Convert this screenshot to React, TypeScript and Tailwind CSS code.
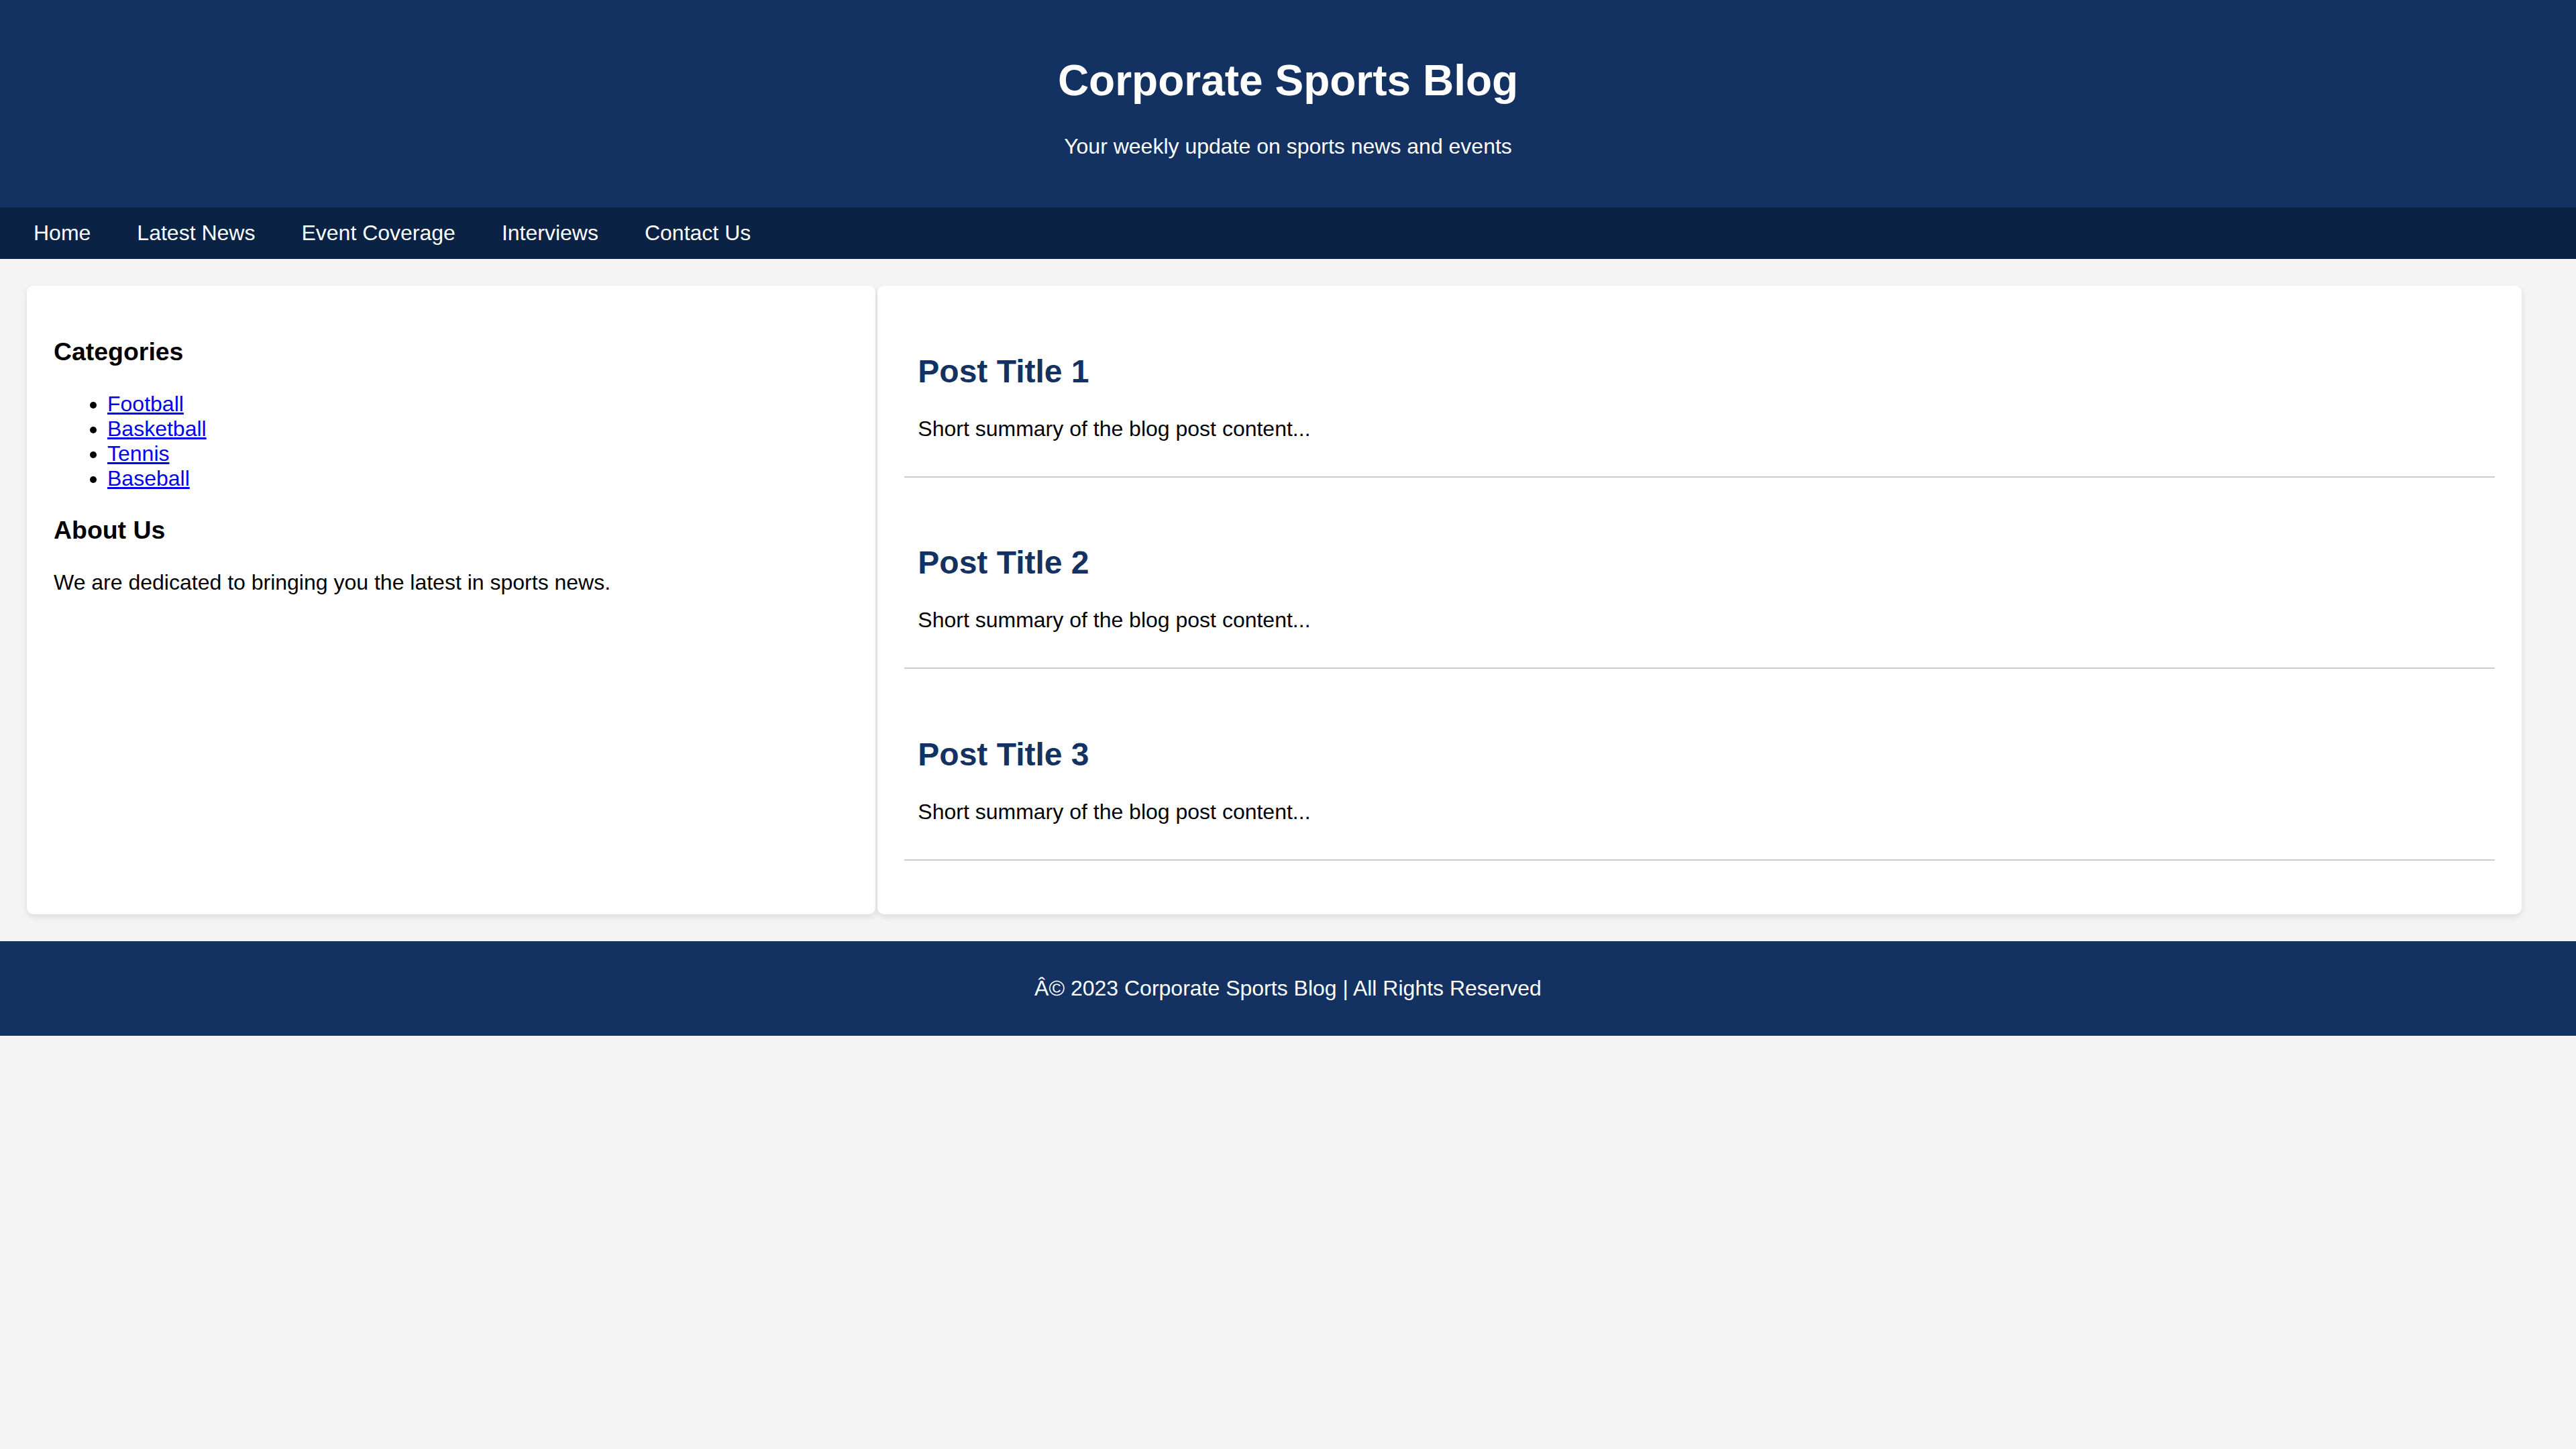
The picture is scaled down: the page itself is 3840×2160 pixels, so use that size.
import React from "react";

const posts = ["Post Title 1", "Post Title 2", "Post Title 3"];
const navItems = ["Home", "Latest News", "Event Coverage", "Interviews", "Contact Us"];
const categories = ["Football", "Basketball", "Tennis", "Baseball"];

export default function App() {
  return (
    <div className="min-h-screen bg-[#f4f4f4] font-['Liberation_Sans',Arial,sans-serif] text-[32px] leading-[normal] text-black">
      <header className="bg-[#133262] text-white text-center py-[40px]">
        <h1 className="text-[64px] font-bold leading-[normal] my-[43px]">Corporate Sports Blog</h1>
        <p className="mt-0 mb-[32px]">Your weekly update on sports news and events</p>
      </header>
      <nav className="bg-[#0a2244] p-[20px] flex gap-[9px]">
        {navItems.map((n) => (
          <a key={n} href="#" className="px-[30px] text-white no-underline">
            {n}
          </a>
        ))}
      </nav>
      <main className="flex items-stretch pt-[40px] pb-[40px] pl-[40px] pr-[81px] gap-[3px]">
        <aside className="flex-1 bg-white p-[40px] rounded-[10px] shadow-[0_4px_10px_rgba(0,0,0,0.1)]">
          <h3 className="text-[37.44px] font-bold leading-[normal] my-[37.44px]">Categories</h3>
          <ul className="list-disc pl-[80px] my-[32px]">
            {categories.map((c) => (
              <li key={c}>
                <a href="#" className="text-[#0000ee] underline">
                  {c}
                </a>
              </li>
            ))}
          </ul>
          <h3 className="text-[37.44px] font-bold leading-[normal] my-[37.44px]">About Us</h3>
          <p className="my-[32px]">We are dedicated to bringing you the latest in sports news.</p>
        </aside>
        <section className="flex-[2] bg-white p-[40px] rounded-[10px] shadow-[0_4px_10px_rgba(0,0,0,0.1)]">
          {posts.map((p) => (
            <article key={p} className="p-[20px] border-b-2 border-[#cccccc] mb-[40px]">
              <h2 className="text-[48px] font-bold leading-[normal] my-[39.84px] text-[#133262]">{p}</h2>
              <p className="my-[32px]">Short summary of the blog post content...</p>
            </article>
          ))}
        </section>
      </main>
      <footer className="bg-[#133262] text-white text-center py-[20px]">
        <p className="my-[32px]">Â© 2023 Corporate Sports Blog | All Rights Reserved</p>
      </footer>
    </div>
  );
}
